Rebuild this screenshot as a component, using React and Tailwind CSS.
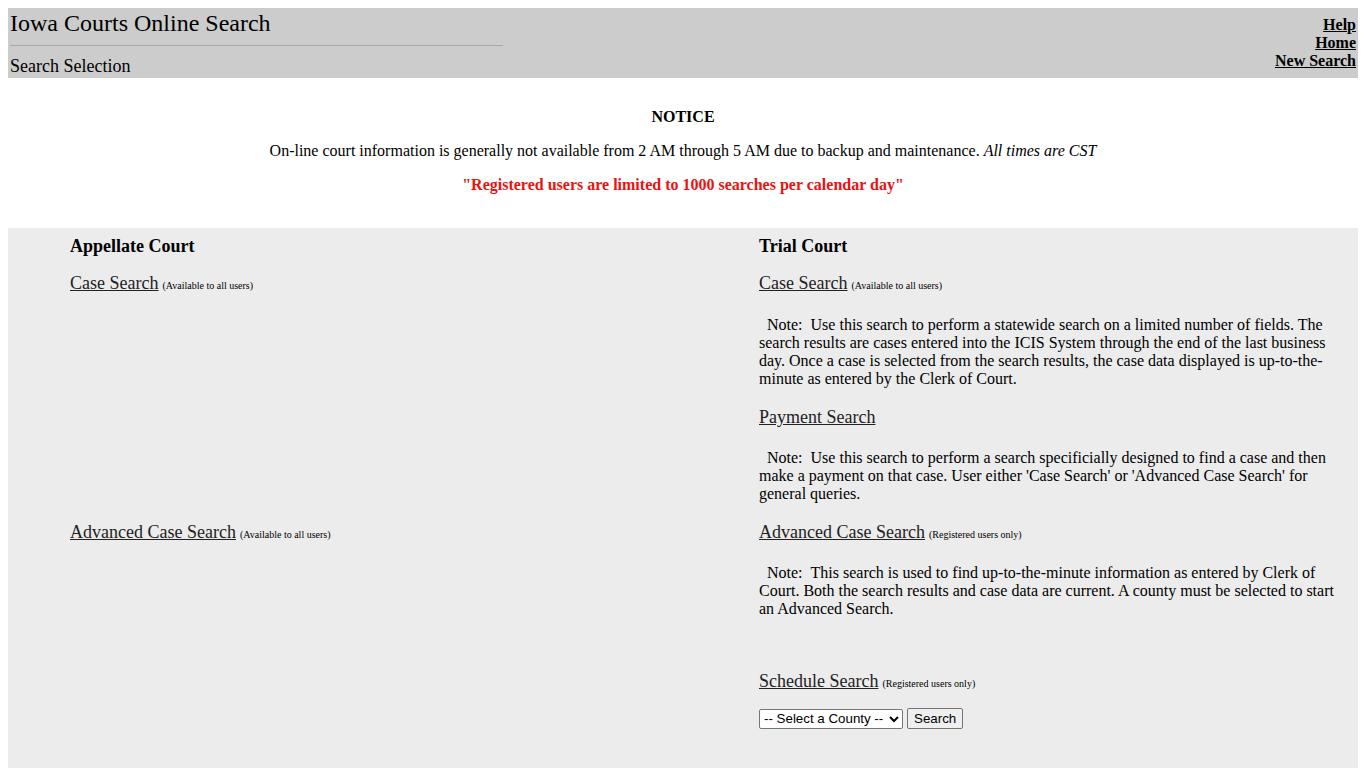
import React from "react";

const serif = "font-['Liberation_Serif','Times_New_Roman',serif]";
const ui = "font-['Liberation_Sans',Arial,sans-serif]";

function SearchLink({ label, note }) {
  return (
    <div className="text-[18px] leading-[21px]">
      <a href="#" className="underline text-[#222]">
        {label}
      </a>
      {note && <span className="text-[10px] ml-1">{note}</span>}
    </div>
  );
}

function Note({ children }) {
  return (
    <p className="text-[16px] leading-[18px]">
      {"\u00a0\u00a0Note:\u00a0\u00a0"}
      {children}
    </p>
  );
}

export default function App() {
  return (
    <div className={`${serif} p-2 text-black bg-white min-h-[768px]`}>
      {/* page header */}
      <div className="bg-[#cccccc] h-[70px] flex justify-between">
        <div className="pl-[2px] w-[495px]">
          <h1 className="text-[24px] leading-[28px] mt-[1px]">Iowa Courts Online Search</h1>
          <hr className="mt-[8px] border-0 border-t border-[#a8a8a8]" />
          <div className="text-[18px] leading-[21px] mt-[10px]">Search Selection</div>
        </div>
        <div className="pt-2 pr-[2px] text-right font-bold text-[16px] leading-[18px] flex flex-col items-end">
          <a href="#" className="underline">Help</a>
          <a href="#" className="underline">Home</a>
          <a href="#" className="underline">New Search</a>
        </div>
      </div>

      {/* notice */}
      <div className="text-center text-[16px] leading-[18px]">
        <div className="font-bold mt-[30px]">NOTICE</div>
        <p className="mt-[16px]">
          On-line court information is generally not available from 2 AM through 5 AM due to backup and
          maintenance. <i>All times are CST</i>
        </p>
        <p className="mt-[16px] font-bold text-[#ee1111]">
          "Registered users are limited to 1000 searches per calendar day"
        </p>
      </div>

      {/* search options */}
      <div className="bg-[#ececec] mt-[34px] min-h-[560px] pl-[62px] pt-2 grid content-start grid-cols-[689px_580px]">
        <h2 className="font-bold text-[18px] leading-[21px]">Appellate Court</h2>
        <h2 className="font-bold text-[18px] leading-[21px]">Trial Court</h2>

        <div className="pt-[16px]">
          <SearchLink label="Case Search" note="(Available to all users)" />
        </div>
        <div className="pt-[16px]">
          <SearchLink label="Case Search" note="(Available to all users)" />
          <div className="mt-[20px]">
            <Note>
              Use this search to perform a statewide search on a limited number of fields. The search results
              are cases entered into the ICIS System through the end of the last business day. Once a case is
              selected from the search results, the case data displayed is up-to-the-minute as entered by the
              Clerk of Court.
            </Note>
          </div>
          <div className="mt-[19px]">
            <SearchLink label="Payment Search" />
          </div>
          <div className="mt-[21px]">
            <Note>
              Use this search to perform a search specificially designed to find a case and then make a payment
              on that case. User either 'Case Search' or 'Advanced Case Search' for general queries.
            </Note>
          </div>
        </div>

        <div className="pt-[19px]">
          <SearchLink label="Advanced Case Search" note="(Available to all users)" />
        </div>
        <div className="pt-[19px]">
          <SearchLink label="Advanced Case Search" note="(Registered users only)" />
          <div className="mt-[19px]">
            <Note>
              This search is used to find up-to-the-minute information as entered by Clerk of Court. Both the
              search results and case data are current. A county must be selected to start an Advanced Search.
            </Note>
          </div>
        </div>

        <div />
        <div className="pt-[53px]">
          <SearchLink label="Schedule Search" note="(Registered users only)" />
          <div className={`${ui} mt-[14px] flex items-center gap-[4px] text-[13.33px]`}>
            <select className="h-[20px] w-[144px] bg-white border border-[#767676] rounded-[2px] text-black">
              <option>-- Select a County --</option>
            </select>
            <button className="h-[21px] px-[6px] bg-[#efefef] border border-[#767676] rounded-[2px] leading-[15px]">
              Search
            </button>
          </div>
        </div>
      </div>
    </div>
  );
}
